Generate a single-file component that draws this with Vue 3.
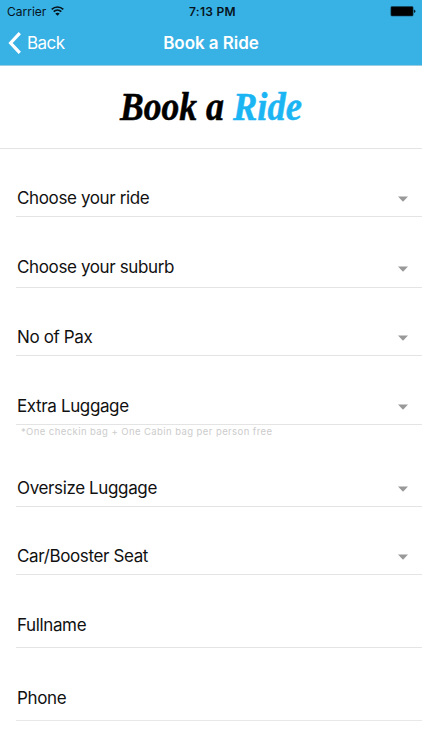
<script setup>
const fields = [
  { label: 'Choose your ride', type: 'first', select: true },
  { label: 'Choose your suburb', type: 'tall', select: true },
  { label: 'No of Pax', type: 'first', select: true },
  { label: 'Extra Luggage', type: 'regular', select: true, hint: '*One checkin bag + One Cabin bag per person free' },
  { label: 'Oversize Luggage', type: 'after-hint', select: true },
  { label: 'Car/Booster Seat', type: 'first', select: true },
  { label: 'Fullname', type: 'input', select: false },
  { label: 'Phone', type: 'input last', select: false },
]
</script>

<template>
  <div class="screen">
    <header class="header">
      <div class="status">
        <div class="carrier">
          <span>Carrier</span>
          <svg class="wifi" width="13" height="10" viewBox="0 0 13 10" fill="none" stroke="#06141c" stroke-width="1.6">
            <path d="M.7 3.4C4 .2 9 .2 12.3 3.4" />
            <path d="M2.7 5.7c2.2-2.1 5.4-2.1 7.6 0" />
            <path d="M4.3 7.5c1.3-1.1 3.1-1.1 4.4 0L6.5 9.7z" fill="#06141c" stroke="none" />
          </svg>
        </div>
        <span class="time">7:13 PM</span>
        <svg class="battery" width="26" height="11" viewBox="0 0 26 11">
          <rect x=".9" y=".6" width="22.2" height="9.4" rx="1" fill="#000" stroke="#17455a" stroke-width=".6" />
          <path d="M23.9 3.8h.5q1 .4 1 1.5t-1 1.5h-.5z" fill="#08202d" />
        </svg>
      </div>
      <nav class="nav">
        <div class="back">
          <svg width="13" height="22" viewBox="0 0 13 22" fill="none" stroke="#fff" stroke-width="3.2">
            <path d="M11.8 1.2 2.6 11l9.2 9.8" />
          </svg>
          <span>Back</span>
        </div>
        <h1>Book a Ride</h1>
        <div></div>
      </nav>
    </header>

    <div class="brand">
      <svg width="200" height="56" viewBox="0 0 200 56" class="wordmark">
        <text x="5" y="35" textLength="77" lengthAdjust="spacingAndGlyphs">Book</text>
        <text x="91" y="35" textLength="18" lengthAdjust="spacingAndGlyphs">a</text>
        <text x="118" y="35" textLength="69" lengthAdjust="spacingAndGlyphs" class="accent">Ride</text>
      </svg>
    </div>

    <main>
      <template v-for="f in fields" :key="f.label">
        <div class="field" :class="f.type">
          <span class="label">{{ f.label }}</span>
          <svg v-if="f.select" class="caret" width="10" height="6" viewBox="0 0 10 6">
            <path d="M0 .6h10L5 5.8z" fill="#999" />
          </svg>
        </div>
        <p v-if="f.hint" class="hint">{{ f.hint }}</p>
      </template>
    </main>
  </div>
</template>

<style>
body {
  margin: 0;
  background: #fff;
}
</style>

<style scoped>
.screen {
  width: 422px;
  height: 750px;
  overflow: hidden;
  background: #fff;
  font-family: Inter, "Liberation Sans", sans-serif;
  color: #111;
}
.header {
  box-sizing: border-box;
  height: 66px;
  background: #38b1e5;
  border-bottom: 1px solid #9acbe1;
}
.status {
  display: grid;
  grid-template-columns: 1fr auto 1fr;
  align-items: center;
  height: 22px;
  padding: 0 6px 0 7px;
  font-size: 12px;
  color: #06141c;
}
.carrier {
  display: flex;
  align-items: center;
  gap: 5px;
}
.wifi {
  margin-bottom: 1px;
}
.time {
  padding-left: 2px;
  font-weight: 600;
  letter-spacing: 0.3px;
}
.battery {
  justify-self: end;
}
.nav {
  display: grid;
  grid-template-columns: 1fr auto 1fr;
  align-items: center;
  height: 42px;
  padding: 0 8px;
  color: #fff;
}
.back {
  display: flex;
  align-items: center;
  gap: 6px;
  font-size: 17px;
  letter-spacing: -0.55px;
}
h1 {
  margin: 0;
  font-size: 17px;
  font-weight: 600;
  letter-spacing: -0.05px;
}
.brand {
  box-sizing: border-box;
  height: 83px;
  padding: 19px 0 0 115px;
  border-bottom: 1px solid #e4e4e4;
}
.wordmark {
  display: block;
  overflow: visible;
  font-family: "Liberation Serif", serif;
  font-size: 40px;
  line-height: 44px;
  font-weight: 700;
  font-style: italic;
  fill: #000;
  stroke: #000;
  stroke-width: 0.5;
}
.wordmark .accent {
  fill: #1cb5f3;
  stroke: #1cb5f3;
}
.field {
  box-sizing: border-box;
  display: flex;
  align-items: flex-end;
  justify-content: space-between;
  height: 68px;
  margin-left: 16px;
  padding: 0 14px 7px 1px;
  border-bottom: 1px solid #e4e4e4;
}
.label {
  font-size: 17px;
  line-height: 21px;
  letter-spacing: -0.37px;
}
.caret {
  margin-bottom: 7px;
}
.tall {
  height: 71px;
  padding-bottom: 9px;
}
.tall .caret {
  margin-bottom: 6px;
}
.regular {
  height: 69px;
}
.hint {
  margin: 0;
  height: 14px;
  padding-left: 21px;
  font-size: 9.5px;
  line-height: 13px;
  letter-spacing: 0.42px;
  color: #ccc;
}
.input {
  height: 73px;
  padding-bottom: 11px;
}
.last {
  border-bottom-color: #e8e8e8;
}
</style>
